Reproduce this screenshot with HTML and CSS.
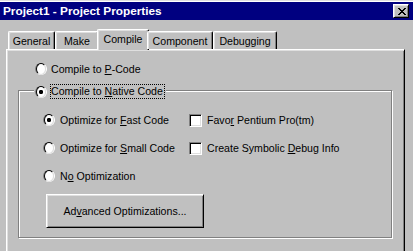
FILE: index.html
```html
<!DOCTYPE html>
<html lang="en">
<head>
<meta charset="utf-8">
<title>Project1 - Project Properties</title>
<link rel="stylesheet" href="styles.css">
</head>
<body>
<div class="window">
  <div class="titlebar">
    <span class="title">Project1 - Project Properties</span>
    <button class="close" aria-label="Close">
      <svg width="8" height="7" viewBox="0 0 8 7" shape-rendering="crispEdges"><path fill="#000" d="M0 0h2v1H0z M6 0h2v1H6z M1 1h2v1H1z M5 1h2v1H5z M2 2h4v1H2z M3 3h2v1H3z M2 4h4v1H2z M1 5h2v1H1z M5 5h2v1H5z M0 6h2v1H0z M6 6h2v1H6z"/></svg>
    </button>
  </div>
  <div class="tabs">
    <div class="tab w-general">General</div>
    <div class="tab w-make">Make</div>
    <div class="tab w-compile sel">Compile</div>
    <div class="tab w-component">Component</div>
    <div class="tab w-debugging">Debugging</div>
  </div>
  <div class="panel">
    <div class="row top-row"><span class="radio"></span><span class="label">Compile to <u>P</u>-Code</span></div>
    <div class="group">
      <div class="legend"><span class="radio on"></span><span class="label focus">Compile to <u>N</u>ative Code</span></div>
      <div class="grid">
        <div class="row"><span class="radio on"></span><span class="label">Optimize for <u>F</u>ast Code</span></div>
        <div class="row"><span class="check"></span><span class="label">Favo<u>r</u> Pentium Pro(tm)</span></div>
        <div class="row"><span class="radio"></span><span class="label">Optimize for <u>S</u>mall Code</span></div>
        <div class="row"><span class="check"></span><span class="label">Create Symbolic <u>D</u>ebug Info</span></div>
        <div class="row"><span class="radio"></span><span class="label">N<u>o</u> Optimization</span></div>
      </div>
      <button class="btn">Ad<u>v</u>anced Optimizations...</button>
    </div>
  </div>
</div>
</body>
</html>
```

FILE: styles.css
```css
* { box-sizing: border-box; }
html, body { margin: 0; padding: 0; }
body {
  width: 413px;
  height: 251px;
  overflow: hidden;
  background: #c0c0c0;
  font-family: "Liberation Sans", Arial, sans-serif;
  font-size: 10.6px;
  color: #000;
}
u { text-decoration: underline; text-underline-offset: 1px; }

.window { border-top: 1px solid #dfdfdf; }

.titlebar {
  height: 19px;
  border-top: 1px solid #fff;
  background: #000080;
  display: flex;
  align-items: flex-start;
  justify-content: space-between;
  padding: 0 4px 0 3px;
}
.title {
  color: #fff;
  font-weight: bold;
  font-size: 11.8px;
  line-height: 18px;
}
.close {
  width: 16px;
  height: 14px;
  margin-top: 2px;
  padding: 0 0 0 1px;
  background: #c0c0c0;
  border: 1px solid;
  border-color: #fff #000 #000 #fff;
  box-shadow: inset 1px 1px #dfdfdf, inset -1px -1px #808080;
  display: flex;
  align-items: center;
  justify-content: center;
}
.close svg { display: block; }

.tabs {
  display: flex;
  align-items: flex-end;
  height: 20px;
  margin: 9px 0 0 8px;
  position: relative;
  z-index: 1;
}
.tab {
  height: 18px;
  border: 1px solid;
  border-color: #fff #000 transparent #fff;
  border-bottom: none;
  border-radius: 2px 2px 0 0;
  box-shadow: inset -1px 0 #808080, inset 1px 1px #dfdfdf;
  background: #c0c0c0;
  display: flex;
  align-items: center;
  justify-content: center;
  white-space: nowrap;
}
.tab.sel {
  height: 21px;
  margin: 0 -2px -1px;
  padding-bottom: 2px;
}
.w-general { width: 47px; }
.w-make { width: 44px; }
.w-compile { width: 48px; }
.w-compile.sel { width: 52px; }
.w-component { width: 66px; }
.w-debugging { width: 64px; }

.panel {
  margin-left: 6px;
  width: 399px;
  height: 210px;
  border: 1px solid;
  border-color: #fff #000 #000 #fff;
  box-shadow: inset 1px 1px #dfdfdf, inset -1px -1px #808080;
  padding-top: 12px;
}

.row {
  display: flex;
  align-items: center;
  height: 14px;
  white-space: nowrap;
}
.top-row { padding-left: 28px; }
.top-row .radio { margin-right: 4px; }

.radio {
  flex: none;
  width: 12px;
  height: 12px;
  border-radius: 50%;
  border: 1px solid;
  border-color: #808080 #fff #fff #808080;
  display: flex;
  align-items: center;
  justify-content: center;
}
.radio::before {
  content: "";
  width: 10px;
  height: 10px;
  border-radius: 50%;
  border: 1px solid;
  border-color: #000 #dfdfdf #dfdfdf #000;
  background: #fff;
}
.radio.on::before {
  background: radial-gradient(circle at 50% 50%, #000 0, #000 1.9px, #fff 2.4px);
}

.check {
  flex: none;
  width: 13px;
  height: 13px;
  border: 1px solid;
  border-color: #808080 #fff #fff #808080;
  background: #fff;
  box-shadow: inset 1px 1px #000, inset -1px -1px #dfdfdf;
}

.group {
  margin: 14px 0 0 11px;
  width: 374px;
  height: 148px;
  border: 1px solid #808080;
  box-shadow: 1px 1px 0 #fff, inset 1px 1px 0 #fff;
}
.legend {
  display: flex;
  align-items: center;
  width: max-content;
  height: 15px;
  margin: -7px 0 0 15px;
  padding: 0 1px;
  background: #c0c0c0;
}
.legend .radio { margin-right: 3px; }
.focus {
  border: 1px dotted #000;
  padding: 0 1px 0 0;
  height: 15px;
  line-height: 13px;
}

.grid {
  display: grid;
  grid-template-columns: 146px auto;
  grid-auto-rows: 14px;
  row-gap: 14px;
  margin: 14px 0 0 24px;
}
.grid .radio, .grid .check { margin-right: 5px; }

.btn {
  display: block;
  width: 158px;
  height: 34px;
  margin: 11px 0 0 27px;
  padding: 0;
  background: #c0c0c0;
  font: inherit;
  color: #000;
  border: 1px solid;
  border-color: #fff #000 #000 #fff;
  box-shadow: inset 1px 1px #dfdfdf, inset -1px -1px #808080;
}
```
